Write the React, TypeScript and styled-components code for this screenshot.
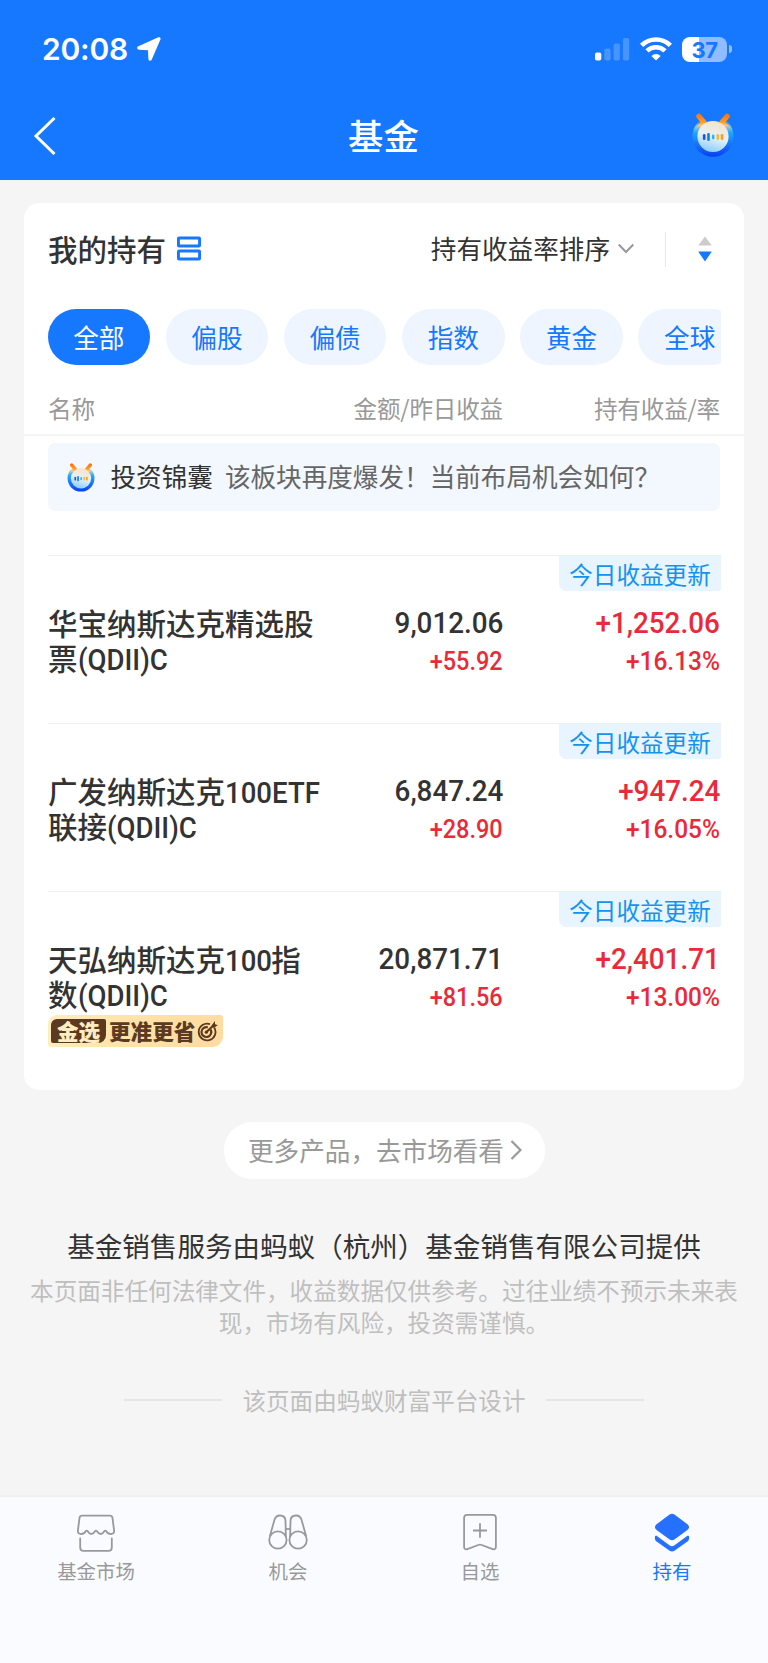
import React from 'react';
import styled, { createGlobalStyle } from 'styled-components';

const BLUE = '#1677ff';
const CJK = '"Noto Sans CJK SC", sans-serif';

const Global = createGlobalStyle`
  * { box-sizing: border-box; }
  body { margin: 0; background: #f5f5f5; font-family: ${CJK}; color: #333; }
  svg { display: block; flex: none; }
`;

const Page = styled.div`
  width: 768px;
  height: 1663px;
  display: flex;
  flex-direction: column;
  background: #f5f5f5;
  overflow: hidden;
  white-space: nowrap;
`;

const Header = styled.header`
  height: 180px;
  flex: none;
  background: ${BLUE};
  color: #fff;
`;

const StatusBar = styled.div`
  height: 92px;
  padding: 6px 36px 0 42px;
  display: flex;
  align-items: center;
  justify-content: space-between;
`;

const Clock = styled.div`
  display: flex;
  align-items: center;
  gap: 9px;
  font: 600 30px/36px Inter, sans-serif;
  letter-spacing: -0.2px;
`;

const StatusIcons = styled.div`
  display: flex;
  align-items: center;
  gap: 10px;
`;

const Battery = styled.div`
  display: flex;
  align-items: center;
  gap: 2px;
`;

const BatteryBody = styled.div<{ $level: number }>`
  width: 45px;
  height: 25px;
  border-radius: 8px;
  background: linear-gradient(90deg, #fff ${p => p.$level}%, #8fbdff ${p => p.$level}%);
  color: ${BLUE};
  font: 700 22px/26px Inter, sans-serif;
  text-align: center;
  letter-spacing: -0.5px;
`;

const BatteryTip = styled.div`
  width: 3px;
  height: 8px;
  border-radius: 0 3px 3px 0;
  background: #8fbdff;
`;

const NavBar = styled.div`
  height: 88px;
  padding: 0 32px 0 33px;
  display: grid;
  grid-template-columns: 46px 1fr 46px;
  align-items: center;
`;

const NavTitle = styled.h1`
  margin: 0;
  padding: 0 2px 3px 0;
  font-size: 35.4px;
  line-height: 50px;
  font-weight: 500;
  text-align: center;
`;

const Card = styled.section`
  margin: 23px 24px 0;
  height: 887px;
  flex: none;
  background: #fff;
  border-radius: 15px;
  overflow: hidden;
`;

const CardHead = styled.div`
  height: 106px;
  padding: 0 32px 14px 24px;
  display: flex;
  align-items: center;
`;

const CardTitle = styled.h2`
  margin: 0 11px 0 0;
  padding-bottom: 3px;
  font-size: 29.5px;
  line-height: 40px;
  font-weight: 500;
`;

const SortLabel = styled.span`
  margin: 0 8px 0 auto;
  padding-bottom: 3px;
  font-size: 25.6px;
  line-height: 36px;
`;

const Separator = styled.i`
  width: 1px;
  height: 35px;
  margin: 0 32px 0 31px;
  background: #e6e6e6;
`;

const Filters = styled.div`
  margin: 0 23px 0 23.5px;
  display: flex;
  gap: 15.7px;
  overflow: hidden;
  border-radius: 0 4px 4px 0;
`;

const Pill = styled.button<{ $on?: boolean }>`
  flex: none;
  width: 102.5px;
  height: 55.5px;
  padding: 0;
  border: 0;
  border-radius: 28px;
  background: ${p => (p.$on ? BLUE : '#eef5ff')};
  color: ${p => (p.$on ? '#fff' : BLUE)};
  font: 400 25.6px/36px ${CJK};
`;

const columns = `
  display: grid;
  grid-template-columns: 285px 170px 217px;
`;

const ColumnHead = styled.div`
  ${columns}
  height: 71.5px;
  padding: 17px 24px 0;
  align-items: center;
  border-bottom: 2px solid #f5f5f5;
  color: #999;
  font-size: 23.6px;
  line-height: 34px;
  letter-spacing: -0.2px;
`;

const Cell = styled.span`
  text-align: right;
  &:first-child { text-align: left; }
`;

const Tip = styled.div`
  margin: 7px 24px 43.5px 23.5px;
  height: 68px;
  padding: 0 18px 2px;
  display: flex;
  align-items: center;
  border-radius: 7px;
  background: #f3f7fe;
  color: #666;
  font-size: 25.6px;
  line-height: 36px;
  & > svg { margin-top: 3px; }
`;

const TipName = styled.strong`
  margin: 0 12px 0 15px;
  font-weight: 400;
  color: #333;
`;

const Fund = styled.article`
  margin: 0 23px 0 24px;
  height: 168px;
  border-top: 1px solid #efefef;
  display: flex;
  flex-direction: column;
`;

const UpdateTag = styled.span`
  align-self: flex-end;
  width: 162px;
  height: 35px;
  border-radius: 0 0 2px 7px;
  background: #e8f4ff;
  color: #1493ee;
  font-size: 23.6px;
  line-height: 36px;
  text-align: center;
`;

const FundBody = styled.div`
  ${columns}
  padding-top: 13px;
`;

const FundName = styled.div`
  padding-top: 1px;
  font-size: 29.5px;
  font-weight: 500;
`;

const NameLine = styled.div`
  height: 35.4px;
  line-height: 35.4px;
`;

const Latin = styled.span<{ $pull?: number }>`
  display: inline-block;
  font-family: Roboto, sans-serif;
  font-weight: 500;
  line-height: 30px;
  transform: scaleX(0.935);
  transform-origin: 0 50%;
  margin-right: ${p => p.$pull ?? 0}px;
`;

const Figures = styled.div`
  padding-top: 1px;
  display: flex;
  flex-direction: column;
  align-items: flex-end;
  font-family: Roboto, sans-serif;
  font-weight: 500;
`;

const Amount = styled.span<{ $gain?: boolean }>`
  font-size: 29.5px;
  line-height: 36px;
  color: ${p => (p.$gain ? '#ea2a3a' : '#333')};
  transform: scaleX(0.943);
  transform-origin: 100% 50%;
`;

const SubAmount = styled.span<{ $wide?: boolean }>`
  font-size: 25px;
  line-height: 30px;
  margin-top: 6px;
  color: #ea2a3a;
  transform: scaleX(${p => (p.$wide ? 0.98 : 0.94)});
  transform-origin: 100% 50%;
`;

const GoldBadge = styled.div`
  width: 175px;
  height: 32px;
  margin-top: 4px;
  padding: 0 3px;
  display: flex;
  align-items: center;
  border-radius: 9px 3px 11px 3px;
  background: linear-gradient(100deg, #ffeebd, #ffe3a8 45%, #ffdb9f);
  color: #5c3a22;
  font-size: 21.6px;
  line-height: 24px;
  font-weight: 900;
  & > svg { margin-left: 2px; }
`;

const GoldMark = styled.span`
  width: 55px;
  height: 24px;
  margin-right: 3px;
  border-radius: 6px 2px 8px 2px;
  background: #5c3a22;
  color: #ffedc0;
  line-height: 23px;
  text-align: center;
`;

const MoreButton = styled.button`
  align-self: center;
  flex: none;
  width: 321px;
  height: 57px;
  margin-top: 32px;
  padding: 0 0 1px 2px;
  display: flex;
  align-items: center;
  justify-content: center;
  gap: 6px;
  border: 0;
  border-radius: 28px;
  background: #fff;
  color: #999;
  font: 400 25.6px/36px ${CJK};
`;

const Provider = styled.p`
  margin: 46px 0 0;
  font-size: 27.55px;
  line-height: 40px;
  text-align: center;
`;

const Disclaimer = styled.p`
  margin: 10px 0 0;
  padding: 0 28px;
  color: #bfbfbf;
  font-size: 23.6px;
  line-height: 31.5px;
  text-align: center;
`;

const Credit = styled.div`
  margin-top: 45px;
  display: flex;
  align-items: center;
  justify-content: center;
  gap: 20px;
  color: #bfbfbf;
  font-size: 23.6px;
  line-height: 34px;
  &::before, &::after {
    content: '';
    width: 98px;
    height: 2px;
    background: #e6e6e6;
  }
`;

const TabBar = styled.nav`
  margin-top: auto;
  height: 168px;
  flex: none;
  display: grid;
  grid-template-columns: repeat(4, 1fr);
  border-top: 2px solid #eef0f3;
  background: #fafbff;
`;

const Tab = styled.a<{ $on?: boolean }>`
  padding-top: 16px;
  display: flex;
  flex-direction: column;
  align-items: center;
  gap: 4px;
  color: ${p => (p.$on ? BLUE : '#999')};
  font-size: 19.4px;
  line-height: 28px;
`;

const Mascot = ({ size, id }: { size: number; id: string }) => (
  <svg width={size} height={size} viewBox="0 0 46 46">
    <defs>
      <linearGradient id={`${id}-ring`} x1="0" y1="0" x2="0" y2="1">
        <stop offset="0.12" stopColor="#ffc06a" stopOpacity="0" />
        <stop offset="0.26" stopColor="#7cc9e6" />
        <stop offset="0.42" stopColor="#1fa6fb" />
        <stop offset="0.68" stopColor="#1578fb" />
        <stop offset="1" stopColor="#0a3df0" />
      </linearGradient>
      <linearGradient id={`${id}-face`} x1="0.65" y1="0" x2="0.35" y2="1">
        <stop offset="0" stopColor="#f8e2c6" />
        <stop offset="0.5" stopColor="#e6f1f5" />
        <stop offset="1" stopColor="#86ccff" />
      </linearGradient>
      <linearGradient id={`${id}-horn`} gradientUnits="userSpaceOnUse" x1="0" y1="2" x2="0" y2="18">
        <stop offset="0" stopColor="#ff7408" />
        <stop offset="0.45" stopColor="#ff9e24" />
        <stop offset="0.65" stopColor="#ffc678" />
        <stop offset="1" stopColor="#43b6f5" stopOpacity="0" />
      </linearGradient>
    </defs>
    <circle cx="23" cy="23.2" r="20.600" fill={`url(#${id}-ring)`} />
    <path
      d="M8.800 3.200L14 9.500L7 17M37.200 3.200L32 9.500l7 7.500"
      fill="none"
      stroke={`url(#${id}-horn)`}
      strokeWidth="5.200"
      strokeLinecap="round"
      strokeLinejoin="round"
    />
    <circle cx="23" cy="23.500" r="15.600" fill={`url(#${id}-face)`} />
    <g strokeWidth="2.600" strokeLinecap="round">
      <path d="M14.200 22.300v3.400" stroke="#1b55dc" />
      <path d="M18.500 21.200v5.600" stroke="#157be8" />
      <path d="M23.200 22.900v2.200" stroke="#2cb3f5" />
      <path d="M27.800 22.300v3.400" stroke="#f5ba35" />
      <path d="M32 22.300v3.400" stroke="#ff9c12" />
    </g>
  </svg>
);

const TargetIcon = () => (
  <svg width="22" height="22" viewBox="0 0 22 22" fill="none" stroke="#5c3a22" strokeWidth="1.8">
    <path d="M17.200 7.500A8.400 8.400 0 1 1 13 4.100" />
    <path d="M13.600 9.600A4.900 4.900 0 1 1 10.800 7.400" strokeWidth="2.200" />
    <circle cx="9.300" cy="12.200" r="1.600" fill="#5c3a22" stroke="none" />
    <path d="M9 12.500L18 4" strokeWidth="2.200" />
    <path d="M14.500 5.500L18 1v3.400l3 .6-4.300 3z" fill="#5c3a22" stroke="none" />
  </svg>
);

const tabs = [
  {
    label: '基金市场',
    icon: (
      <svg width="40" height="40" viewBox="0 0 40 40" fill="none" stroke="#999" strokeWidth="1.8" strokeLinecap="round">
        <path d="M6.200 2.700H33.800C35.400 2.700 36.300 3.500 36.500 4.900L38.100 17.700C38.300 19.900 37 21 35 21C32.500 21 31.500 20.500 30.300 18.300Q29.300 16.800 28.300 18.300C27.300 20 26.300 21 24.700 21S22 20 21 18.300Q20 16.800 19 18.300C18 20 17 21 15.300 21S12.700 20 11.700 18.300Q10.700 16.800 9.700 18.300C8.500 20.500 7.500 21 5 21C3 21 1.700 19.900 1.900 17.700L3.500 4.900C3.700 3.500 4.600 2.700 6.200 2.700z" />
        <path d="M4.200 25.500v9c0 2.300 1.200 3.400 3.300 3.400h25c2.100 0 3.300-1.100 3.300-3.400v-9" />
      </svg>
    ),
  },
  {
    label: '机会',
    icon: (
      <svg width="40" height="40" viewBox="0 0 40 40" fill="none" stroke="#999" strokeWidth="1.8">
        <circle cx="9.900" cy="27" r="8.700" />
        <circle cx="30.100" cy="27" r="8.700" />
        <path d="M1.800 23.500L6.400 7C7.300 3.900 9.300 2.500 12 2.500C15.800 2.500 17.400 4.500 17.500 8L17.900 24" />
        <path d="M38.200 23.500L33.600 7C32.700 3.900 30.700 2.500 28 2.500C24.200 2.500 22.600 4.500 22.500 8L22.100 24" />
        <path d="M18 16h4" />
      </svg>
    ),
  },
  {
    label: '自选',
    icon: (
      <svg width="40" height="40" viewBox="0 0 40 40" fill="none" stroke="#999" strokeWidth="1.8" strokeLinejoin="round">
        <path d="M7.200 1.900h25.600c2.100 0 3.100 1.100 3.100 3.100v29c0 2-1.400 2.800-3.200 2.100l-11-4.100c-1.100-.4-2.300-.4-3.400 0l-11 4.100c-1.800.7-3.200-.1-3.200-2.100V5c0-2 1-3.100 3.100-3.100z" />
        <path d="M20 10.300v14.400M13 17.500h14" />
      </svg>
    ),
  },
  {
    label: '持有',
    on: true,
    icon: (
      <svg width="40" height="40" viewBox="0 0 40 40" fill="#2670ff">
        <path d="M17.600 1.600c1.500-1 3.300-1 4.800 0l13 9.600c2.200 1.700 2.200 4.100 0 5.800l-13 9.500c-1.500 1-3.300 1-4.800 0L4.600 17c-2.200-1.700-2.200-4.100 0-5.800z" />
        <path d="M5.200 23.200l12.600 9.200c1.400 1 3 1 4.400 0l12.600-9.200c1.100-.8 2.300-.5 2.300 1 0 2-.2 3.300-1.700 4.400l-13 9.200c-1.600 1.100-3.200 1.100-4.800 0l-13-9.200c-1.500-1.100-1.700-2.400-1.700-4.400 0-1.500 1.200-1.800 2.300-1z" />
      </svg>
    ),
  },
];

const funds = [
  {
    first: <>华宝纳斯达克精选股</>,
    second: <>票<Latin>(QDII)C</Latin></>,
    amount: '9,012.06', day: '+55.92', gain: '+1,252.06', rate: '+16.13%',
  },
  {
    first: <>广发纳斯达克<Latin>100ETF</Latin></>,
    second: <>联接<Latin>(QDII)C</Latin></>,
    amount: '6,847.24', day: '+28.90', gain: '+947.24', rate: '+16.05%',
  },
  {
    first: <>天弘纳斯达克<Latin $pull={-4}>100</Latin>指</>,
    second: <>数<Latin>(QDII)C</Latin></>,
    amount: '20,871.71', day: '+81.56', gain: '+2,401.71', rate: '+13.00%',
    gold: true,
  },
];

export default function App() {
  return (
    <Page>
      <Global />
      <Header>
        <StatusBar>
          <Clock>
            20:08
            <svg width="24" height="24" viewBox="0 0 24 24" fill="#fff">
              <path d="M21.300.3C23 -.3 24 .9 23.400 2.600L14.800 22.500c-.8 1.800-3.300 1.500-3.400-.6L11 13.200 2 12.700c-2.200-.1-2.600-2.500-.6-3.400z" />
            </svg>
          </Clock>
          <StatusIcons>
            <svg width="35" height="24" viewBox="0 0 35 24" fill="#4794ff">
              <rect x="0" y="15.500" width="6.300" height="8" rx="1.800" fill="#fff" />
              <rect x="9.300" y="11.500" width="6.300" height="12" rx="1.800" />
              <rect x="18.600" y="6.500" width="6.300" height="17" rx="1.800" />
              <rect x="27.900" y="1" width="6.300" height="22.500" rx="1.800" />
            </svg>
            <svg width="32" height="24" viewBox="0 0 32 24" fill="none" stroke="#fff" strokeWidth="4.600">
              <path d="M1.600 8.400a20.500 20.500 0 0 1 28.800 0" />
              <path d="M7 13.900a12.900 12.900 0 0 1 18 0" />
              <path d="M16 23.500l-4.600-4.600a6.600 6.600 0 0 1 9.200 0z" fill="#fff" stroke="none" />
            </svg>
            <Battery>
              <BatteryBody $level={37}>37</BatteryBody>
              <BatteryTip />
            </Battery>
          </StatusIcons>
        </StatusBar>
        <NavBar>
          <svg width="24" height="38" viewBox="0 0 24 38" fill="none" stroke="#fff" strokeWidth="3">
            <path d="M21.500 1L3 19l18.500 18" />
          </svg>
          <NavTitle>基金</NavTitle>
          <Mascot size={46} id="nav" />
        </NavBar>
      </Header>

      <Card>
        <CardHead>
          <CardTitle>我的持有</CardTitle>
          <svg width="24" height="26" viewBox="0 0 24 26" fill="none" stroke={BLUE} strokeWidth="2.900">
            <rect x="1.450" y="1.950" width="21.100" height="8.100" rx="0.600" />
            <rect x="1.450" y="14.950" width="21.100" height="8.100" rx="0.600" />
          </svg>
          <SortLabel>持有收益率排序</SortLabel>
          <svg width="16" height="12" viewBox="0 0 16 12" fill="none" stroke="#999" strokeWidth="2">
            <path d="M.7 1.500L8 9l7.300-7.500" />
          </svg>
          <Separator />
          <svg width="14" height="26" viewBox="0 0 14 26">
            <path d="M7 .5l6.800 9H.2z" fill="#ccc" />
            <path d="M7 25.500L.2 15.500h13.600z" fill={BLUE} />
          </svg>
        </CardHead>
        <Filters>
          {['全部', '偏股', '偏债', '指数', '黄金', '全球'].map((t, i) => (
            <Pill key={t} $on={i === 0}>{t}</Pill>
          ))}
        </Filters>
        <ColumnHead>
          <Cell>名称</Cell>
          <Cell>金额/昨日收益</Cell>
          <Cell>持有收益/率</Cell>
        </ColumnHead>
        <Tip>
          <Mascot size={30} id="tip" />
          <TipName>投资锦囊</TipName>
          该板块再度爆发！当前布局机会如何？
        </Tip>
        {funds.map(f => (
          <Fund key={f.amount}>
            <UpdateTag>今日收益更新</UpdateTag>
            <FundBody>
              <FundName>
                <NameLine>{f.first}</NameLine>
                <NameLine>{f.second}</NameLine>
                {f.gold && (
                  <GoldBadge>
                    <GoldMark>金选</GoldMark>
                    更准更省
                    <TargetIcon />
                  </GoldBadge>
                )}
              </FundName>
              <Figures>
                <Amount>{f.amount}</Amount>
                <SubAmount>{f.day}</SubAmount>
              </Figures>
              <Figures>
                <Amount $gain>{f.gain}</Amount>
                <SubAmount $wide>{f.rate}</SubAmount>
              </Figures>
            </FundBody>
          </Fund>
        ))}
      </Card>

      <MoreButton>
        更多产品，去市场看看
        <svg width="12" height="20" viewBox="0 0 12 20" fill="none" stroke="#999" strokeWidth="2.200">
          <path d="M1.500 1L10.500 10l-9 9" />
        </svg>
      </MoreButton>
      <Provider>基金销售服务由蚂蚁（杭州）基金销售有限公司提供</Provider>
      <Disclaimer>
        本页面非任何法律文件，收益数据仅供参考。过往业绩不预示未来表
        <br />
        现，市场有风险，投资需谨慎。
      </Disclaimer>
      <Credit>该页面由蚂蚁财富平台设计</Credit>

      <TabBar>
        {tabs.map(t => (
          <Tab key={t.label} $on={t.on}>
            {t.icon}
            {t.label}
          </Tab>
        ))}
      </TabBar>
    </Page>
  );
}
